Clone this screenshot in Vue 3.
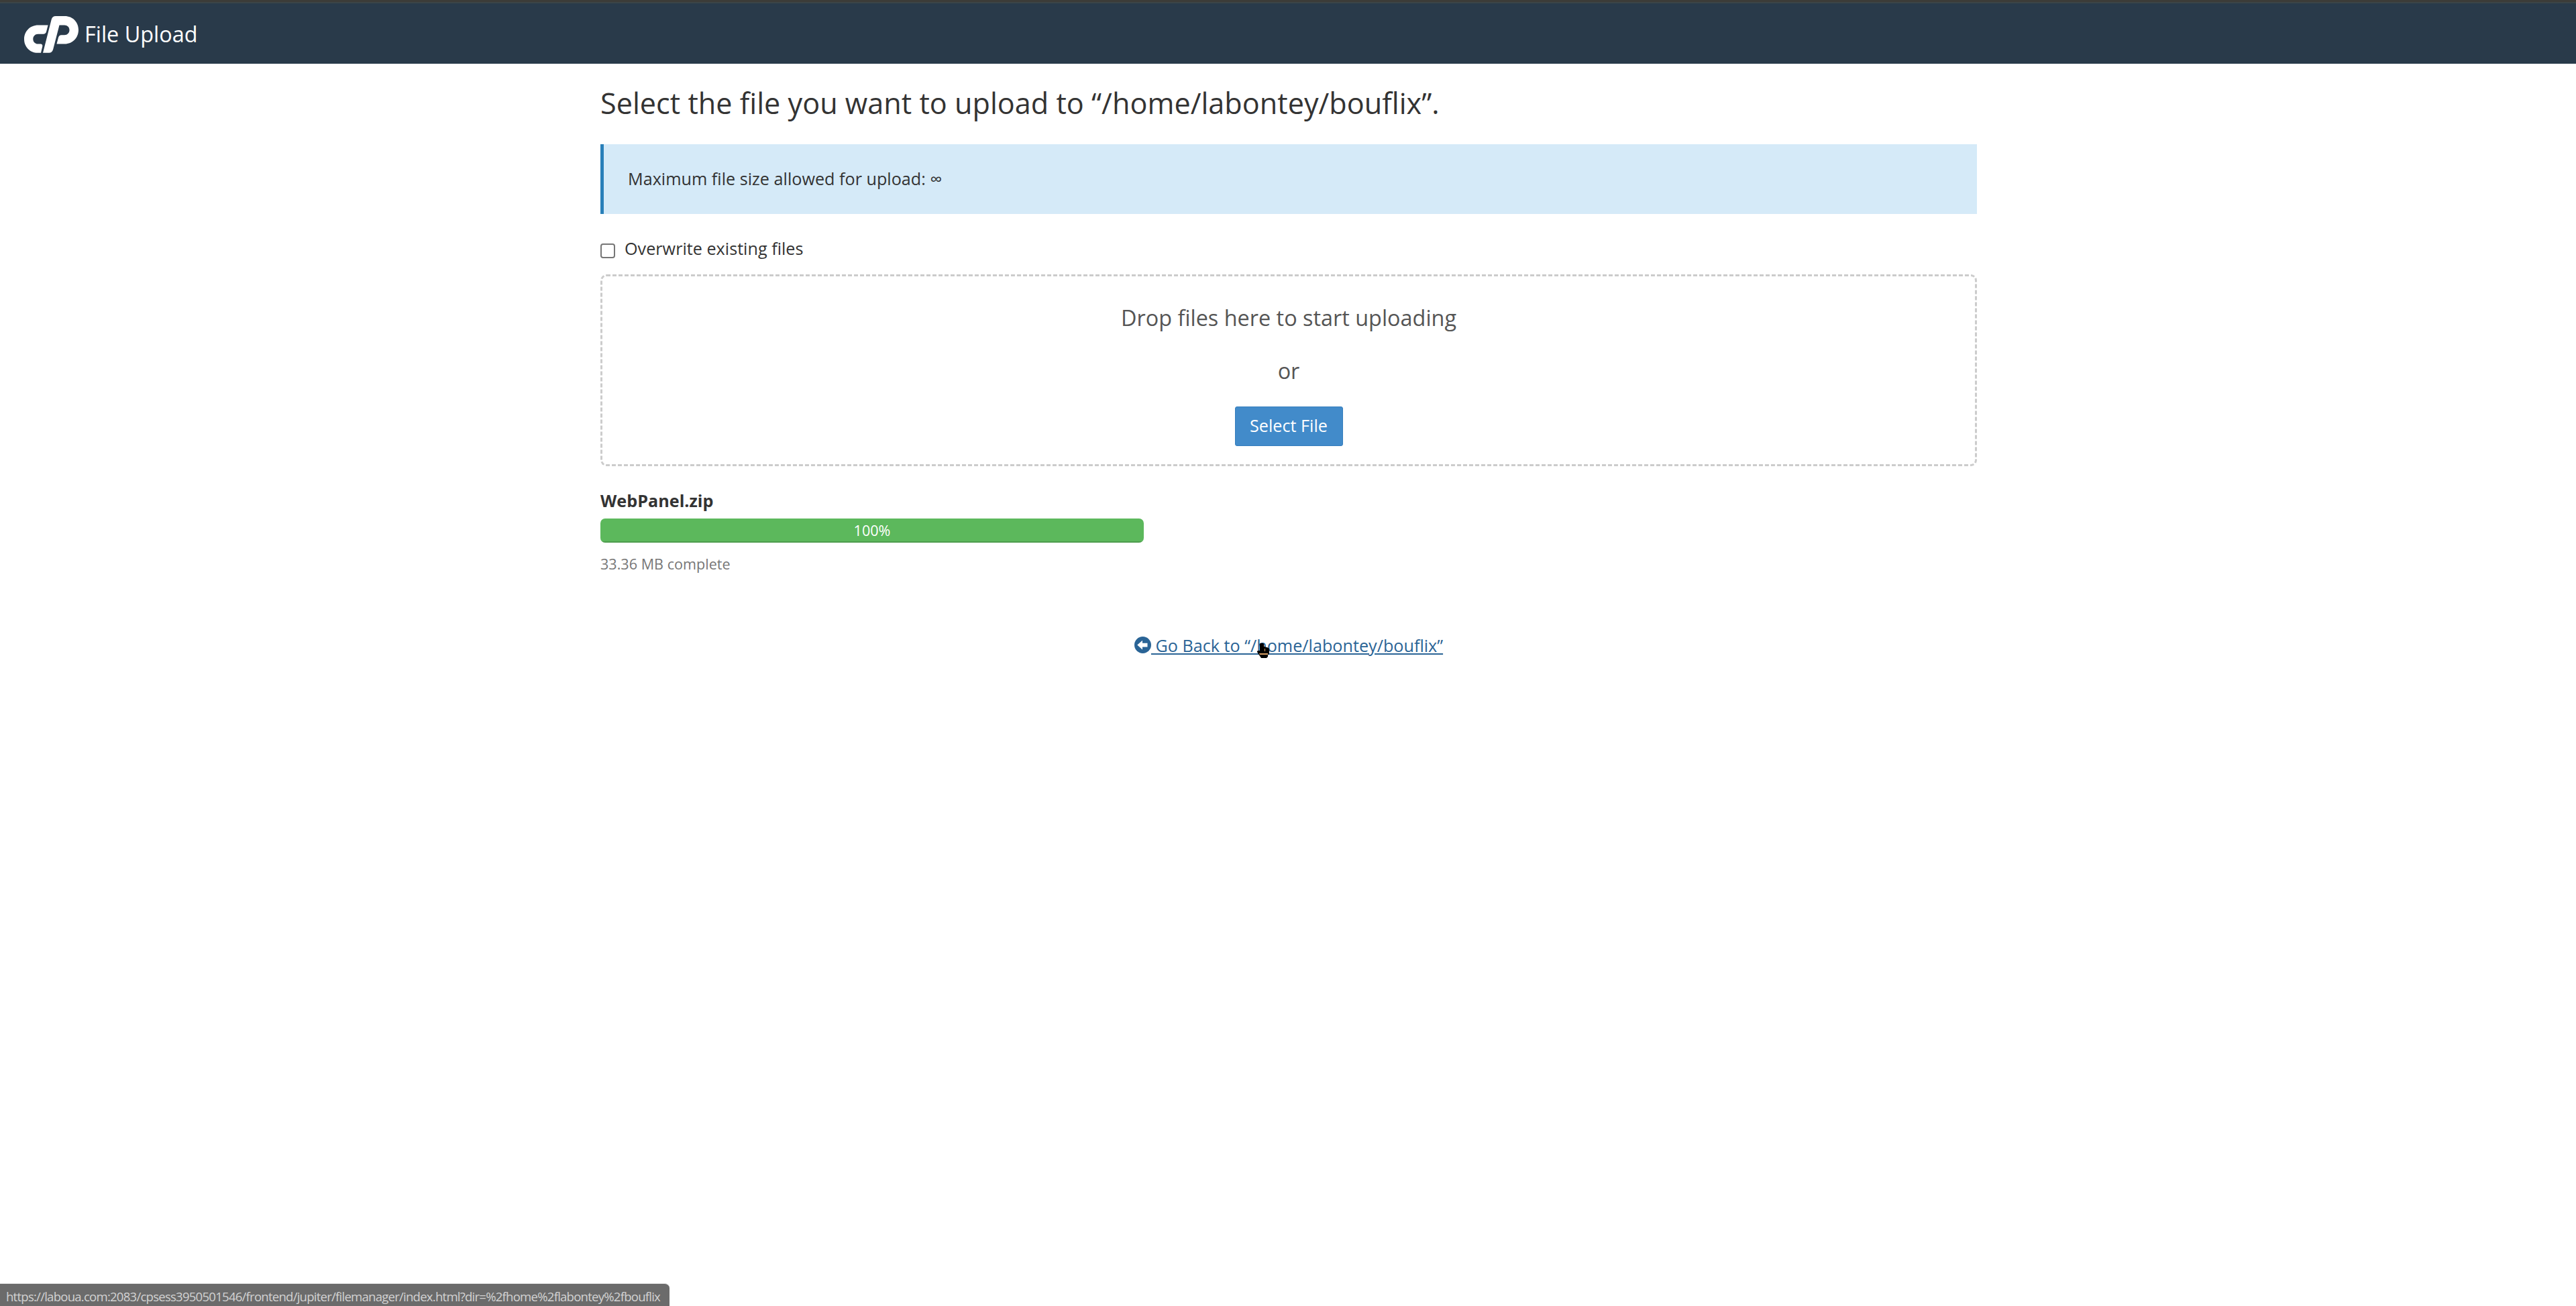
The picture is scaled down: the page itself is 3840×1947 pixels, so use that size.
<script setup>
import { ref } from "vue"

const uploadDir = ref("/home/labontey/bouflix")
const overwrite = ref(false)

const uploads = ref([
  { id: 1, name: "WebPanel.zip", percent: 100, size: "33.36 MB" }
])

const statusUrl = "https://laboua.com:2083/cpsess3950501546/frontend/jupiter/filemanager/index.html?dir=%2fhome%2flabontey%2fbouflix"
</script>

<template>
  <div class="page">
    <header class="navbar">
      <svg class="logo" viewBox="0 0 81 55">
        <path d="M35.600 13.500 L21 13.500 C8.500 13.500 0 23 0 34.500 C0 46 9 54.800 20 54.800 L25 54.800 L27.300 45 C27.600 43 26.500 41.600 24.500 41.600 L20.500 41.600 C16.500 41.600 13.300 38.500 13.300 34.300 C13.300 30 16.500 26.700 20.500 26.700 L28.500 26.700 C31 26.700 32.500 25.500 33 23.500 Z" />
        <path d="M28 54.800 L40.700 5 C41.600 1.500 43.800 0 47 0 L60.500 0 C72.500 0 81 9 81 20.500 C81 32.500 72 41.500 60.500 41.500 L48.500 41.500 L51 32 C51.600 29.800 53.200 28.300 55.500 28.300 L60 28.300 C64.500 28.300 67.500 25 67.500 20.800 C67.500 16.500 64.300 13.500 60 13.500 L52.500 13.500 L43.200 49.500 C42.300 53 40 54.800 37 54.800 Z" />
      </svg>
      <span class="brand">File Upload</span>
    </header>

    <main class="container">
      <h1>Select the file you want to upload to “{{ uploadDir }}”.</h1>

      <div class="alert">Maximum file size allowed for upload: ∞</div>

      <label class="overwrite">
        <input v-model="overwrite" type="checkbox" />
        <span>Overwrite existing files</span>
      </label>

      <!-- drop area -->
      <div class="dropzone">
        <p>Drop files here to start uploading</p>
        <p>or</p>
        <button class="btn">Select File</button>
      </div>

      <!-- uploads -->
      <div v-for="item in uploads" :key="item.id" class="upload">
        <strong class="file-name">{{ item.name }}</strong>
        <div class="progress">
          <div class="bar" :style="{ width: item.percent + '%' }">{{ item.percent }}%</div>
        </div>
        <div class="complete">{{ item.size }} complete</div>
      </div>

      <div class="go-back">
        <a href="#">
          <svg class="back-icon" viewBox="0 0 25 25">
            <circle cx="12.5" cy="12.5" r="12.5" />
            <path d="M4.300 12.600 L12 5.800 V9.800 H19.500 V15.400 H12 V19.400 Z" fill="#fff" />
          </svg>
          <span class="back-text">&nbsp;Go Back to “{{ uploadDir }}”</span>
        </a>
        <svg class="pointer" viewBox="0 0 18 22">
          <path d="M4 1 L5 0 H9 L10 1 V5 H12 L13 6 H15 L18 8 V15 L16 18 V20 L14 22 H6 L4 19 L2 16 L0 13 V12 L1 11 H4 Z" />
          <path d="M3 15 H16 V17 H4 Z M11 8 H12 V12 H11 Z" fill="#d9a066" />
        </svg>
      </div>
    </main>

    <div class="status-bar">{{ statusUrl }}</div>
  </div>
</template>

<style>
body {
  background: #fff;
}
</style>

<style scoped>
.page {
  height: 1947px;
  display: flex;
  flex-direction: column;
  font-family: "Open Sans", sans-serif;
  font-size: 25.2px;
  line-height: 36px;
  color: #333;
}

.navbar {
  box-sizing: border-box;
  height: 95px;
  padding: 0 36px;
  border-top: 3px solid #3c3c38;
  box-shadow: inset 0 2px #3b4548;
  background: #293a4a;
  display: flex;
  align-items: center;
}

.logo {
  width: 81px;
  height: 55px;
  margin-top: 5px;
  fill: #fff;
}

.brand {
  margin: 1px 0 0 9px;
  color: #fff;
  font-size: 32.4px;
}

.container {
  width: 2052px;
  margin: 0 auto;
  position: relative;
  left: 1px;
}

h1 {
  margin: 35px 0 0;
  font-size: 43.2px;
  font-weight: 400;
  line-height: 48px;
}

.alert {
  box-sizing: border-box;
  height: 104px;
  margin-top: 37px;
  padding: 33px 36px;
  border-left: 5px solid #2980b9;
  background: #d5eaf8;
}

.overwrite {
  display: flex;
  margin-top: 33px;
  gap: 14px;
}

.overwrite input {
  appearance: none;
  box-sizing: border-box;
  width: 22px;
  height: 22px;
  margin: 11px 0 0;
  border: 2px solid #767676;
  border-radius: 4px;
  background: #fff;
}

.dropzone {
  box-sizing: border-box;
  height: 286px;
  margin-top: 21px;
  padding-top: 38px;
  border: 3px dashed #ccc;
  border-radius: 9px;
  display: flex;
  flex-direction: column;
  align-items: center;
  color: #555;
  font-size: 32.4px;
}

.dropzone p {
  margin: 0 0 32px;
  line-height: 47px;
}

.dropzone p + p {
  margin-bottom: 30px;
}

.btn {
  box-sizing: border-box;
  width: 161px;
  height: 59px;
  padding: 0 0 3px;
  border: 1px solid #357ebd;
  border-radius: 3px;
  background: #428bca;
  color: #fff;
  font-family: inherit;
  font-size: 25.2px;
}

.upload {
  width: 810px;
  margin-top: 33px;
}

.file-name {
  display: block;
  height: 45px;
}

.progress {
  height: 36px;
  border-radius: 7px;
  overflow: hidden;
  background: #f5f5f5;
}

.bar {
  height: 36px;
  background: #5cb85c;
  box-shadow: inset 0 -2px rgba(0, 0, 0, 0.15);
  color: #fff;
  font-size: 21.6px;
  text-align: center;
}

.complete {
  margin-top: 14px;
  color: #777;
  font-size: 21.6px;
}

.go-back {
  margin-top: 85px;
  display: flex;
  justify-content: center;
  position: relative;
}

.go-back a {
  display: flex;
  color: #2a6496;
  text-decoration: none;
}

.back-icon {
  width: 25px;
  height: 25px;
  margin-top: 5px;
  fill: #2a6496;
}

.back-text {
  text-decoration: underline;
}

.pointer {
  position: absolute;
  left: 979px;
  top: 15px;
  width: 18px;
  height: 22px;
}

.status-bar {
  box-sizing: border-box;
  align-self: flex-start;
  width: 998px;
  height: 34px;
  margin-top: auto;
  padding-left: 9px;
  border-top: 1px solid #e4e4e4;
  border-radius: 0 7px 0 0;
  background: #6b6b6b;
  color: #d2d2d2;
  font-size: 18.6px;
  letter-spacing: -0.78px;
  line-height: 38px;
  white-space: nowrap;
}
</style>
